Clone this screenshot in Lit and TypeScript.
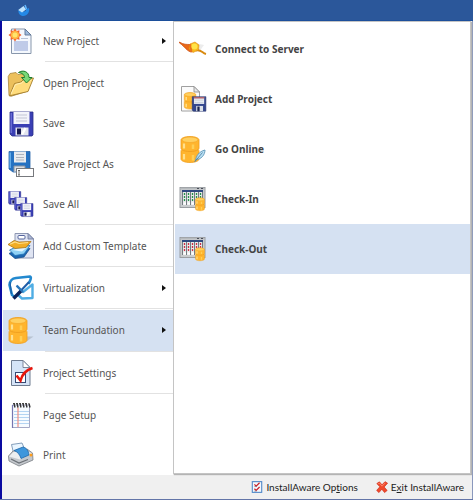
import { LitElement, html, svg, css, nothing } from "lit";
import { customElement } from "lit/decorators.js";
import { classMap } from "lit/directives/class-map.js";

const cylinder = (fill: string, edge: string) => svg`
  <path d="M2 5V13C2 14 2.300 14.400 2.800 14.800C2.200 15.200 2 15.600 2 16.300V24C2 26 6 27.500 11 27.500S20 26 20 24V16.300C20 15.600 19.800 15.200 19.200 14.800C19.700 14.400 20 14 20 13V5C20 3 16 1.500 11 1.500S2 3 2 5Z" fill=${fill} stroke=${edge} stroke-width=".8"/>
  <ellipse cx="11" cy="4.800" rx="8" ry="2.700" fill="#ffd060" stroke=${edge} stroke-width=".5"/>
  <path d="M3 14.800C6 17 16 17 19 14.800" fill="none" stroke=${edge} stroke-width="1"/>
  <path d="M5 8.500V13.500M5 19V24.500" stroke="#ffe08c" stroke-width="2.200"/>
  <path d="M14 9.500V14M14 20V25.500" stroke="#ffcf55" stroke-width="2.500"/>`;

const floppy = svg`
  <path d="M3 3H26V26L25 27H5L3 25Z" fill="#3a3fb4" stroke="#2a2d88" stroke-width=".8"/>
  <path d="M4.200 4V24" stroke="#7478dc" stroke-width="1.200"/>
  <rect x="6.500" y="3" width="16" height="12" fill="#f3f4fa"/>
  <path d="M9 6H20M9 9H20M9 12H20" stroke="#c2c5d4" stroke-width="1"/>
  <rect x="8.500" y="18.500" width="13" height="8" fill="#e2e4ee"/>
  <rect x="10" y="19.500" width="4" height="6" fill="#15174f"/>
  <path d="M15 25.500L18.500 19" stroke="#fff" stroke-width="2.400"/>`;

const grid = (dash: string) => svg`
  <rect x="1" y="2.500" width="25" height="20" fill="#c9ccce" stroke="#9a9ea2"/>
  <path d="M2 3.500H25" stroke="#b6babd" stroke-width="1.500"/>
  <path d="M18 3.500H20M22 3.500H24" stroke="#4a4e58" stroke-width="1"/>
  <rect x="3" y="5" width="21" height="15" fill="#e6e9e9"/>
  <path d="M3 6H24" stroke="#2f4a80" stroke-width="2"/>
  <path d="M3.500 7V20M7.500 7V20M11.500 7V20M15.500 7V20M19.500 7V20M23.500 7V20" stroke="#737b82" stroke-width="1"/>
  <path d="M5.500 8V17M9.500 8V17M13.500 8V17M17.500 8V13M21.500 8V13" stroke=${dash} stroke-width="1.300" stroke-dasharray="2 1"/>
  <path d="M4.500 18.500H7M8.500 18.500H11M12.500 18.500H15" stroke="#fff" stroke-width="2"/>
  <g transform="translate(15.500 12) scale(.5)">${cylinder("#ffb52e", "#ee9c14")}</g>`;

const icons: Record<string, unknown> = {
  newProject: svg`
    <path d="M4.500 2H18L24 8V26.500H4.500Z" fill="#f4f8fd" stroke="#8897ac"/>
    <path d="M18 2V8H24Z" fill="#9fbbdc" stroke="#5f7593" stroke-width=".9"/>
    <rect x="7" y="14" width="14" height="10" fill="#bfcbe8"/>
    <path d="M14 11.500H21" stroke="#b7c3d6"/>
    <path d="M8 1.500L9.700 4L12.500 3.200L12.200 6.200L14.500 8L12.200 9.700L12.500 12.800L9.700 12L8 14.500L6.300 12L3.500 12.800L3.800 9.700L1.500 8L3.800 6.200L3.500 3.200L6.300 4Z" fill="#f2602c"/>
    <circle cx="8" cy="8" r="4.300" fill="#ffb340"/><circle cx="8" cy="8" r="2.500" fill="#ffe56b"/>`,
  open: svg`
    <path d="M2 26.500L1.200 7.500L3 4.500L9 3.500L11 5.500L18 4.500L21 8V22L4 27.300Z" fill="#ecc05c" stroke="#a8863e" stroke-width=".8"/>
    <path d="M2.500 26.800L7.500 14.500L14 13L16 11L26.500 9L21 22.500Z" fill="#ffdc7c" stroke="#a57e2c" stroke-width=".9"/>
    <path d="M4 25L8.500 15.500L14.500 14L16.500 12.200L24 11" stroke="#fff0b8" fill="none"/>
    <path d="M11.500 3.500C16 .5 22 2.500 22 8.500H25L19.500 14L14.500 8.500H17.500C17.500 6 15.500 4 11.500 3.500Z" fill="#78d877" stroke="#1e7a2c" stroke-width="1"/>`,
  save: floppy,
  saveAs: svg`
    <path d="M2 1.500H23V22H6L2 19Z" fill="#2672c2" stroke="#2562a8" stroke-width=".8"/>
    <path d="M3.200 2.500V18" stroke="#69b1ee" stroke-width="1.400"/>
    <rect x="7" y="1.500" width="12" height="11" fill="#e9ebee"/>
    <path d="M9 4.500H17M9 7.500H17M9 10H17" stroke="#aeb4bd"/>
    <path d="M7 22V16H18V19" fill="#d9dde3" stroke="#8a93a0"/>
    <rect x="9.500" y="18.500" width="17" height="8" fill="#fff" stroke="#77797d"/>
    <path d="M11 20.500H13M12 20.500V25M11 25H13" stroke="#333" stroke-width=".7"/>`,
  saveAll: svg`
    <g transform="translate(0 0) scale(.53)">${floppy}</g>
    <g transform="translate(6 6) scale(.53)">${floppy}</g>
    <g transform="translate(12 12) scale(.54)">${floppy}</g>`,
  template: svg`
    <path d="M8 1.500H21L26.500 7V26H8Z" fill="#dfe4f2" stroke="#8e97b2"/>
    <path d="M21 1.500V7H26.500Z" fill="#aeb9d5" stroke="#69749a" stroke-width=".8"/>
    <rect x="11" y="3.500" width="7" height="3.500" rx="1" fill="#fff" stroke="#55649c"/>
    <path d="M2 21.500L9 18L23 16.500L17 25L8 26.500Z" fill="#1b67b1" stroke="#164a86" stroke-width=".7"/>
    <path d="M2.500 18L10 14.500L23 13.500L17 22L8 23.500Z" fill="#8fd1f5" stroke="#2474b8" stroke-width=".8"/>
    <path d="M5 18L11 16.500L20 15.500L15 19.500Z" fill="#e2f5ff"/>
    <path d="M1 12.500L7 8.500L12 10L24 9.500L19 15.500L8 16.500Z" fill="#f2ad25" stroke="#a66d0c" stroke-width=".7"/>
    <path d="M3 12.300L8 10L12 11.500L21 10.500" fill="none" stroke="#ffe08a" stroke-width="1.200"/>`,
  virtual: svg`
    <path d="M8 23L5 21L2.500 11C3 6 5 4.500 9 4L23 2.500C25 3 23 7 21.500 10" fill="none" stroke="#2389cf" stroke-width="2.600" stroke-linejoin="round"/>
    <path d="M3 8L4.500 20" fill="none" stroke="#1a5fa8" stroke-width="1.200"/>
    <path d="M10 12L16 18L25.500 10.500V24L15 24.500L10 20" fill="none" stroke="#4fade4" stroke-width="2.400" stroke-linejoin="round"/>
    <path d="M7.500 23.500L22 8" stroke="#1d5ca8" stroke-width="2"/>
    <path d="M6.500 24.500L14.500 16.500" stroke="#0c2258" stroke-width="3.400"/>
    <path d="M9.500 11.500L16 18" stroke="#2a74b8" stroke-width="2.200"/>`,
  team: svg`
    <path d="M18 26.500L26.500 20.500H18Z" fill="#a5adb9" opacity=".6"/>${cylinder("#ffb52e", "#f0a020")}`,
  settings: svg`
    <path d="M4.500 1.500H16L23 8.500V26.500H4.500Z" fill="#d5e4f7" stroke="#6f7c90"/>
    <path d="M16 1.500V8.500H23Z" fill="#fff" stroke="#6f7c90" stroke-width=".9"/>
    <rect x="8.500" y="13.500" width="10" height="10" fill="#fff" stroke="#354a75"/>
    <path d="M9.500 16.500L13.500 21.500C15 16 19 11 25.500 9" fill="none" stroke="#e8160c" stroke-width="2.600"/>`,
  page: svg`
    <path d="M5.500 4H22.500V26.500H5.500Z" fill="#f7fbff" stroke="#a5a9c6"/>
    <path d="M5.500 4V27" stroke="#7676b0" stroke-width="1.200"/>
    <path d="M7 10.500H22M7 13.500H22M7 16.500H22M7 19.500H22M7 22.500H22" stroke="#b4d4f2"/>
    <path d="M11 6.500V26" stroke="#ee8e80" stroke-width="1.200"/>
    <path d="M8 6.500L7 2.500M11 6.500L10 2.500M14 6.500L13 2.500M17 6.500L16 2.500M20 6.500L19 2.500M23 6.500L22 2.500" stroke="#333" stroke-width="1.400"/>
    <path d="M6 2.500H21.500" stroke="#444" stroke-width="1" stroke-dasharray="2 1"/>`,
  print: svg`
    <path d="M4.500 3.500L15 2L18.500 10L7 14Z" fill="#eaf6ff" stroke="#7894b2" stroke-width=".9"/>
    <path d="M1.500 15L6 10L20 8L25.500 12L26 19L12 25L2 20Z" fill="#c4c8cd" stroke="#85898f" stroke-width=".9"/>
    <path d="M2 15.500L6.500 11L19 9.500L25 12.500L13 18.500Z" fill="#eceef0"/>
    <path d="M7 9.500L16 6C20 7 21.500 10 22 14L14 17.500C13 14 11 11 7 9.500Z" fill="#3f97dc" stroke="#1d66a8" stroke-width=".8"/>
    <path d="M4 18L12 22L21 18.500" fill="none" stroke="#6a6f75" stroke-width="1.200"/>
    <circle cx="24" cy="14" r="1.500" fill="#ff9d1c"/>`,
  connect: svg`
    <path d="M16 8L25 10L20 17Z" fill="#e4e4e4" opacity=".7"/>
    <path d="M.5 7C4 9.500 8 9.500 11.500 9.500L13 17C8 17 6 11.500 .5 8Z" fill="#ea6a18" stroke="#c8480a" stroke-width=".7"/>
    <path d="M17 15.500C22 14 23 18 27 19" fill="none" stroke="#d88a10" stroke-width="2"/>
    <path d="M11 9L16 7L20 10L19.500 15L14 17.500L10 14Z" fill="#f8b91c" stroke="#e08c10" stroke-width=".6"/>
    <path d="M11 9L12.500 17" stroke="#e8701c" stroke-width="1.800"/>
    <circle cx="15.500" cy="11.500" r="3" fill="#ffe348"/>`,
  addProject: svg`
    <path d="M2.500 1.500H15L20.500 7V26H2.500Z" fill="#fbfbfb" stroke="#a0a0a0"/>
    <path d="M15 1.500V7H20.500Z" fill="#e7e7e7" stroke="#888" stroke-width=".8"/>
    <g transform="translate(4 6.500) scale(.64)">${cylinder("#ffb52e", "#f0a020")}</g>
    <g transform="translate(11.500 10.500) scale(.57 .58)">
      <path d="M3 2H27V27H5L3 25Z" fill="#34478e" stroke="#26336b"/>
      <rect x="6" y="2.500" width="18" height="12" fill="#e9edf3"/>
      <path d="M6 4H24" stroke="#9b3440" stroke-width="2"/>
      <path d="M7 8H23M7 12H23" stroke="#b9c0ca"/>
      <rect x="10" y="18" width="12" height="9" fill="#dce1e8"/><rect x="12" y="19" width="4" height="8" fill="#1a2452"/>
    </g>`,
  online: svg`${cylinder("#ffb52e", "#f0a020")}
    <path d="M16.500 26C17 21 20 16.500 26 15C26 20 22 24.500 17 24.500Z" fill="#b9dff3" stroke="#5f97b8" stroke-width=".9"/>
    <path d="M15.500 27L23.500 17.500" stroke="#4f84a6" stroke-width=".9"/>`,
  checkIn: grid("#26924a"),
  checkOut: grid("#cf2f46"),
  options: svg`
    <rect x="3" y="1.500" width="22" height="25" fill="#f3f7fc" stroke="#4d86c8" stroke-width="2.500"/>
    <path d="M8 8L12 12L20 4M8 18L12 22L20 14" fill="none" stroke="#c81e26" stroke-width="2.800"/>
    <path d="M8 13H13M8 23.500H13" stroke="#667" stroke-width="1.500"/>`,
  exit: svg`
    <path d="M2 6L8 2L14 9L21 1.500L27 5L19 14L26 22L20 27L13.500 19L7 27L1.500 22L9 13.500Z" fill="#f04a2c" stroke="#cf2c18" stroke-width="1.600"/>
    <path d="M5 6L8 5L14 12L21 5" fill="none" stroke="#ff8c70" stroke-width="2"/>`,
};

const icon = (name: string, small = false) => html`
  <svg class=${classMap({ icon: true, small })} viewBox="0 0 28 28" aria-hidden="true">${icons[name]}</svg>`;

interface Entry {
  label: string;
  icon: string;
  sub?: boolean;
  line?: boolean;
  active?: boolean;
}

const commands: Entry[] = [
  { label: "New Project", icon: "newProject", sub: true, line: true },
  { label: "Open Project", icon: "open" },
  { label: "Save", icon: "save" },
  { label: "Save Project As", icon: "saveAs" },
  { label: "Save All", icon: "saveAll", line: true },
  { label: "Add Custom Template", icon: "template", line: true },
  { label: "Virtualization", icon: "virtual", sub: true, line: true },
  { label: "Team Foundation", icon: "team", sub: true, line: true, active: true },
  { label: "Project Settings", icon: "settings", line: true },
  { label: "Page Setup", icon: "page" },
  { label: "Print", icon: "print" },
];

const teamCommands: Entry[] = [
  { label: "Connect to Server", icon: "connect" },
  { label: "Add Project", icon: "addProject" },
  { label: "Go Online", icon: "online" },
  { label: "Check-In", icon: "checkIn" },
  { label: "Check-Out", icon: "checkOut", active: true },
];

@customElement("app-root")
export class AppRoot extends LitElement {
  static styles = css`
    :host {
      display: flex;
      flex-direction: column;
      box-sizing: border-box;
      min-height: 100vh;
      background: #f0f0f0;
      border-bottom: 1px solid #6375a8;
      font: 10px/16px "Noto Sans", "Open Sans", sans-serif;
      color: #555;
    }
    .title {
      height: 21px;
      box-sizing: border-box;
      background: #2b579a;
      border-bottom: 1px solid #1c4f9b;
      padding: 4px 17px;
    }
    .logo { display: block; width: 13px; height: 13px; }
    .body {
      flex: 1;
      display: grid;
      grid-template-columns: 171px 1fr;
      border-left: 2px solid #0a0aa0;
      border-right: 1px solid #8a98bd;
    }
    .menu { display: flex; flex-direction: column; background: #fff; }
    .item {
      flex: 1;
      display: flex;
      align-items: center;
      gap: 8px;
      min-height: 40px;
      margin: 0 0 0 1px;
      padding: 0 7px 0 4px;
      border: 0;
      background: none;
      font: inherit;
      color: inherit;
      text-align: left;
    }
    .label { flex: 1; white-space: nowrap; }
    .active { background: #d5e1f2; }
    .line {
      height: 1px;
      margin: 0 0 1px 43px;
      border: 0;
      background: #e2e2e2;
    }
    .icon { flex: none; width: 28px; height: 28px; overflow: visible; }
    .small { width: 12px; height: 12px; }
    .arrow {
      border-left: 4px solid #111;
      border-top: 3px solid transparent;
      border-bottom: 3px solid transparent;
    }
    .panel {
      display: flex;
      flex-direction: column;
      margin: 0 1px 1px 0;
      padding-top: 2px;
      background: #fff;
      border: 1px solid #c4c4c4;
      box-shadow: 1px 1px 1px #b4b4b4;
      font-weight: 700;
      color: #444;
    }
    .panel .item { flex: none; height: 50px; }
    .footer {
      display: flex;
      align-items: center;
      justify-content: flex-end;
      gap: 18px;
      height: 24px;
      padding-right: 8px;
      border-left: 2px solid #0a0aa0;
      border-right: 1px solid #8a98bd;
      font-family: Lato, "Noto Sans", sans-serif;
      font-variant-ligatures: none;
      color: #222;
    }
    .action {
      display: flex;
      align-items: center;
      gap: 3px;
      padding: 0;
      border: 0;
      background: none;
      font: inherit;
      color: inherit;
    }
    .key { text-decoration: underline; }
  `;

  private item(entry: Entry) {
    return html`
      <button class=${classMap({ item: true, active: !!entry.active })} role="menuitem">
        ${icon(entry.icon)}
        <span class="label">${entry.label}</span>
        ${entry.sub ? html`<span class="arrow"></span>` : nothing}
      </button>
      ${entry.line ? html`<hr class="line" />` : nothing}`;
  }

  render() {
    return html`
      <header class="title">
        <svg class="logo" viewBox="0 0 13 13" aria-hidden="true">
          <path d="M8 1L9.500 5L12 4C13 8 10 12 6.500 12C3 12 1 9.500 1.500 6L5 8L9 7Z" fill="#2489e6"/>
          <path d="M1.200 6L6.500 2L9 5.500L5 8.500Z" fill="#bde4ff"/>
          <path d="M8 1L9.500 5" stroke="#62b8ff" stroke-width="1.500"/>
        </svg>
      </header>
      <main class="body">
        <nav class="menu" role="menu">${commands.map((c) => this.item(c))}</nav>
        <section class="panel" role="menu" aria-label="Team Foundation">
          ${teamCommands.map((c) => this.item(c))}
        </section>
      </main>
      <footer class="footer">
        <button class="action">${icon("options", true)}<span>InstallAware Op<span class="key">t</span>ions</span></button>
        <button class="action">${icon("exit", true)}<span>E<span class="key">x</span>it InstallAware</span></button>
      </footer>`;
  }
}
